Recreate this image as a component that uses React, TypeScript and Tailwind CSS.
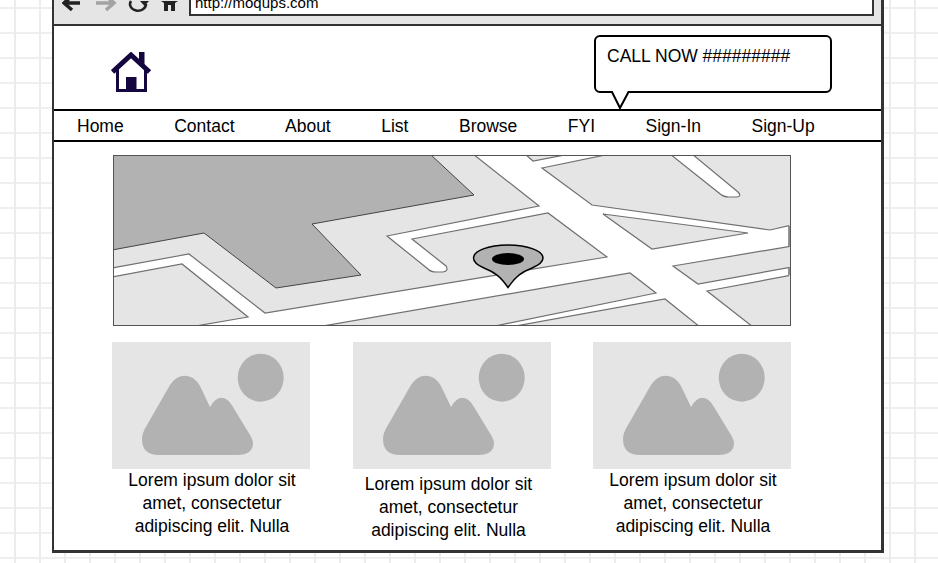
const navItems = ['Home', 'Contact', 'About', 'List', 'Browse', 'FYI', 'Sign-In', 'Sign-Up'];

const cards = [
  { id: 1, cardClass: '', textClass: 'pt-0 pl-[2px]' },
  { id: 2, cardClass: 'ml-[43px]', textClass: 'pt-[4px] pr-[7px]' },
  { id: 3, cardClass: 'ml-[42px]', textClass: 'pt-0 pl-[2px]' },
];

function ImagePlaceholder() {
  return (
    <svg className="block" width="198" height="127" viewBox="0 0 198 127">
      <rect width="198" height="127" fill="#e5e5e5" />
      <ellipse cx="148.7" cy="35.7" rx="23" ry="24" fill="#b2b2b2" />
      <path
        d="M47 113 Q30 113 30 97 Q30 91 35 83 L58 43 Q64 33.7 73 33.7 Q82 33.7 88 44 L98 65 Q103 55.7 110 55.7 Q116 56 121 65 L138 93 Q141 98 141 101 Q141 113 125 113 Z"
        fill="#b2b2b2"
      />
    </svg>
  );
}

function MapPicture() {
  return (
    <svg className="block" width="676" height="169" viewBox="114 156 676 169">
      <rect x="113" y="155" width="678" height="171" fill="#fff" />
      <g fill="#e5e5e5" stroke="#707070" strokeWidth="1.2">
        <path d="M112 268 L189 254 L265 313 L607 257 L548 213 L412 239 L446 266 Q449 271 443 272 L436 272 Q431 272 428 269 L387 236 L539 206 L473 154 L112 154 Z" />
        <path d="M112 277 L182 264 L248 317 L190 327 L112 327 Z" />
        <path d="M317 327 L630 273 L656 293 L490 327 Z" />
        <path d="M510 327 L665 299 L700 327 Z" />
        <path d="M525 154 L533 161 L570 154 Z" />
        <path d="M542 168 L610 154 L670 154 L719 193 Q723 197 729 197 L737 197 Q742 196 738 192 L692 154 L792 154 L792 225 L770 230 L592 205 Z" />
        <path d="M603 214 L748 233 L652 249 Z" />
        <path d="M673 266 L792 246 L792 267 L698 284 Z" />
        <path d="M707 291 L792 275 L792 327 L753 327 Z" />
      </g>
      {/* roads stop just short of the right edge */}
      <rect x="789" y="225" width="3" height="51" fill="#e5e5e5" />
      <path d="M789 226 V247 M789 267 V275" fill="none" stroke="#707070" strokeWidth="1.5" />
      <path
        d="M112 154 L430 154 L474 195 L312 224 L361 275 L276 288 L204 233 L112 250 Z"
        fill="#b2b2b2"
        stroke="#444"
        strokeWidth="1"
      />
      <path
        d="M508 287.5 C500 276 494 272 484 268 C477 265 473.5 262 473.5 258 C473.5 251 488 245 508 245 C528 245 543 251 543 258 C543 262 539 265 532 268 C522 272 516 276 508 287.5 Z"
        fill="#b2b2b2"
        stroke="#000"
        strokeWidth="1.5"
      />
      <ellipse cx="508" cy="259" rx="16" ry="6" fill="#000" />
    </svg>
  );
}

export default function App() {
  return (
    <div
      className="w-[938px] h-[563px] overflow-hidden bg-white bg-[linear-gradient(to_right,#ececec_2px,transparent_2px),linear-gradient(#efefef_2px,transparent_2px)] bg-[size:25px_25px] bg-[position:14px_7px] pl-[52px]"
      style={{ fontFamily: '"Liberation Sans", Arial, sans-serif' }}
    >
      <div className="w-[832px] h-[553px] bg-white border-l-2 border-r-[3px] border-b-[3px] border-[#333]">
        {/* browser chrome, cut off by the top of the page */}
        <div className="h-[26px] bg-[#e5e5e5] border-b-2 border-[#333] flex items-start pl-[8px]">
          <svg className="block" width="125" height="16" viewBox="62 0 125 16">
            <path d="M80 3 H65 M72 -4 L64 3 L72 10" fill="none" stroke="#222" strokeWidth="3.5" />
            <path d="M96 3 H113 M106 -4 L114 3 L106 10" fill="none" stroke="#a3a3a3" strokeWidth="3.5" />
            <path d="M146 4 A8 6.5 0 1 1 131 1" fill="none" stroke="#222" strokeWidth="2.5" />
            <path d="M140 1 H149 L144.5 6 Z" fill="#222" />
            <path d="M161 1 H178 L175 3 V11 H164 V3 Z" fill="#222" />
            <rect x="168" y="5" width="3" height="6" fill="#e5e5e5" />
          </svg>
          <div className="w-[685px] h-[17px] -mt-px ml-[2px] bg-white border-2 border-t-0 border-[#333] flex items-end overflow-hidden pl-[4px]">
            <span className="text-[15px] leading-[15px] mb-[4px] text-black whitespace-nowrap">http://moqups.com</span>
          </div>
        </div>

        {/* header with logo and call-out */}
        <div className="h-[83px] flex items-start">
          <svg className="block mt-[26px] ml-[57px]" width="41" height="41" viewBox="111 52 41 41">
            <path d="M112.5 72 L131 55 L149.5 72" fill="none" stroke="#15063f" strokeWidth="5" />
            <rect x="139" y="52" width="5.5" height="13" fill="#15063f" />
            <path d="M117.5 68 V90.5 H145.5 V68" fill="none" stroke="#15063f" strokeWidth="3" />
            <rect x="126" y="77" width="10.5" height="14" fill="#15063f" />
          </svg>
          <div className="relative z-10 mt-[9px] ml-[442px] w-[238px] h-[58px] bg-white border-2 border-black rounded-[6px] pl-[11px] pt-[8px] text-[17.5px] leading-[22px] text-black">
            CALL NOW #########
            <svg className="absolute left-[14px] top-[54px]" width="22" height="20" viewBox="0 0 22 20">
              <path d="M1.5 0 L10 17 L19 0" fill="#fff" stroke="#000" strokeWidth="2" />
            </svg>
          </div>
        </div>

        {/* navigation */}
        <div className="h-[33px] border-y-2 border-black flex items-center gap-[50.5px] pl-[23px] pt-[2px] text-[17.5px] text-black">
          {navItems.map((item) => (
            <span key={item}>{item}</span>
          ))}
        </div>

        <div className="pl-[59px] pt-[13px]">
          <div className="w-[678px] h-[171px] border border-[#555]">
            <MapPicture />
          </div>
        </div>

        <div className="flex pl-[58px] pt-[16px]">
          {cards.map((card) => (
            <div key={card.id} className={`w-[198px] ${card.cardClass}`}>
              <ImagePlaceholder />
              <p className={`text-center text-[17.5px] leading-[23px] text-black ${card.textClass}`}>
                Lorem ipsum dolor sit amet, consectetur adipiscing elit. Nulla
              </p>
            </div>
          ))}
        </div>
      </div>
    </div>
  );
}
